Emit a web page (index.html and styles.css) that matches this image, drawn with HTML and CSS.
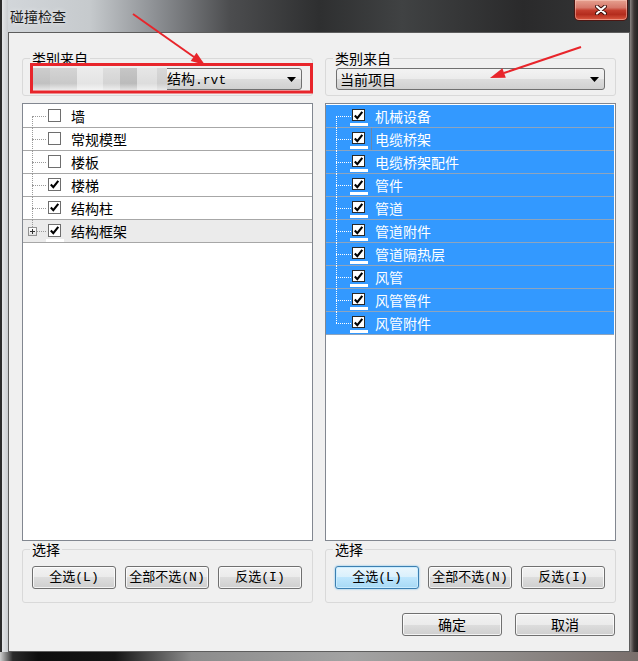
FILE: index.html
```html
<!DOCTYPE html>
<html lang="zh-CN">
<head>
<meta charset="utf-8">
<title>碰撞检查</title>
<link rel="stylesheet" href="styles.css">
</head>
<body>
<div class="window">
  <div class="titlebar">
    <span class="title">碰撞检查</span>
    <div class="close">
      <svg width="12" height="10" viewBox="0 0 12 10">
        <path d="M2 1.5 L10 8.5 M10 1.5 L2 8.5" stroke="#3a0d08" stroke-width="4" stroke-linecap="round"/>
        <path d="M2 1.5 L10 8.5 M10 1.5 L2 8.5" stroke="#ffffff" stroke-width="2.2" stroke-linecap="round"/>
      </svg>
    </div>
  </div>
  <div class="client">
    <div class="columns">
      <div class="column">
        <fieldset class="group source">
          <legend>类别来自</legend>
          <div class="combo blurred">
            <span class="blur">
              <span class="b1"></span><span class="b2"></span><span class="b3"></span><span class="b4"></span><span class="b5"></span><span class="b6"></span><span class="b7"></span>
            </span>
            <span class="combo-value">结构<span class="mono">.rvt</span></span>
            <svg class="combo-arrow" width="9" height="5" viewBox="0 0 9 5"><path d="M0 0 H9 L4.5 5 Z" fill="#000"/></svg>
          </div>
        </fieldset>
        <div class="tree">
          <ul class="rows">
            <li class="row first"><span class="branch"></span><span class="checkwrap"><span class="check"></span></span><span class="label">墙</span></li>
            <li class="row"><span class="branch"></span><span class="checkwrap"><span class="check"></span></span><span class="label">常规模型</span></li>
            <li class="row"><span class="branch"></span><span class="checkwrap"><span class="check"></span></span><span class="label">楼板</span></li>
            <li class="row"><span class="branch"></span><span class="checkwrap"><span class="check checked"><svg width="11" height="11" viewBox="0 0 11 11"><path d="M1.8 5.6 L4.3 8.2 L9.3 1.8" fill="none" stroke="#000" stroke-width="2.1"/></svg></span></span><span class="label">楼梯</span></li>
            <li class="row"><span class="branch"></span><span class="checkwrap"><span class="check checked"><svg width="11" height="11" viewBox="0 0 11 11"><path d="M1.8 5.6 L4.3 8.2 L9.3 1.8" fill="none" stroke="#000" stroke-width="2.1"/></svg></span></span><span class="label">结构柱</span></li>
            <li class="row last hover"><span class="branch"><span class="expander"><svg width="7" height="7" viewBox="0 0 7 7"><path d="M1 3.5 H6 M3.5 1 V6" stroke="#333" stroke-width="1"/></svg></span></span><span class="checkwrap"><span class="check checked"><svg width="11" height="11" viewBox="0 0 11 11"><path d="M1.8 5.6 L4.3 8.2 L9.3 1.8" fill="none" stroke="#000" stroke-width="2.1"/></svg></span><span class="bar"></span></span><span class="label">结构框架</span></li>
          </ul>
        </div>
        <fieldset class="group select">
          <legend>选择</legend>
          <div class="buttons">
            <button class="btn">全选(L)</button>
            <button class="btn">全部不选(N)</button>
            <button class="btn">反选(I)</button>
          </div>
        </fieldset>
      </div>
      <div class="column">
        <fieldset class="group source">
          <legend>类别来自</legend>
          <div class="combo">
            <span class="combo-value">当前项目</span>
            <svg class="combo-arrow" width="9" height="5" viewBox="0 0 9 5"><path d="M0 0 H9 L4.5 5 Z" fill="#000"/></svg>
          </div>
        </fieldset>
        <div class="tree active">
          <ul class="rows">
            <li class="row first"><span class="branch"></span><span class="checkwrap"><span class="check checked"><svg width="11" height="11" viewBox="0 0 11 11"><path d="M1.8 5.6 L4.3 8.2 L9.3 1.8" fill="none" stroke="#000" stroke-width="2.1"/></svg></span><span class="bar"></span></span><span class="label">机械设备</span></li>
            <li class="row"><span class="branch"></span><span class="checkwrap"><span class="check checked"><svg width="11" height="11" viewBox="0 0 11 11"><path d="M1.8 5.6 L4.3 8.2 L9.3 1.8" fill="none" stroke="#000" stroke-width="2.1"/></svg></span><span class="bar"></span></span><span class="label focus">电缆桥架</span></li>
            <li class="row"><span class="branch"></span><span class="checkwrap"><span class="check checked"><svg width="11" height="11" viewBox="0 0 11 11"><path d="M1.8 5.6 L4.3 8.2 L9.3 1.8" fill="none" stroke="#000" stroke-width="2.1"/></svg></span><span class="bar"></span></span><span class="label">电缆桥架配件</span></li>
            <li class="row"><span class="branch"></span><span class="checkwrap"><span class="check checked"><svg width="11" height="11" viewBox="0 0 11 11"><path d="M1.8 5.6 L4.3 8.2 L9.3 1.8" fill="none" stroke="#000" stroke-width="2.1"/></svg></span><span class="bar"></span></span><span class="label">管件</span></li>
            <li class="row"><span class="branch"></span><span class="checkwrap"><span class="check checked"><svg width="11" height="11" viewBox="0 0 11 11"><path d="M1.8 5.6 L4.3 8.2 L9.3 1.8" fill="none" stroke="#000" stroke-width="2.1"/></svg></span><span class="bar"></span></span><span class="label">管道</span></li>
            <li class="row"><span class="branch"></span><span class="checkwrap"><span class="check checked"><svg width="11" height="11" viewBox="0 0 11 11"><path d="M1.8 5.6 L4.3 8.2 L9.3 1.8" fill="none" stroke="#000" stroke-width="2.1"/></svg></span><span class="bar"></span></span><span class="label">管道附件</span></li>
            <li class="row"><span class="branch"></span><span class="checkwrap"><span class="check checked"><svg width="11" height="11" viewBox="0 0 11 11"><path d="M1.8 5.6 L4.3 8.2 L9.3 1.8" fill="none" stroke="#000" stroke-width="2.1"/></svg></span><span class="bar"></span></span><span class="label">管道隔热层</span></li>
            <li class="row"><span class="branch"></span><span class="checkwrap"><span class="check checked"><svg width="11" height="11" viewBox="0 0 11 11"><path d="M1.8 5.6 L4.3 8.2 L9.3 1.8" fill="none" stroke="#000" stroke-width="2.1"/></svg></span><span class="bar"></span></span><span class="label">风管</span></li>
            <li class="row"><span class="branch"></span><span class="checkwrap"><span class="check checked"><svg width="11" height="11" viewBox="0 0 11 11"><path d="M1.8 5.6 L4.3 8.2 L9.3 1.8" fill="none" stroke="#000" stroke-width="2.1"/></svg></span><span class="bar"></span></span><span class="label">风管管件</span></li>
            <li class="row last"><span class="branch"></span><span class="checkwrap"><span class="check checked"><svg width="11" height="11" viewBox="0 0 11 11"><path d="M1.8 5.6 L4.3 8.2 L9.3 1.8" fill="none" stroke="#000" stroke-width="2.1"/></svg></span><span class="bar"></span></span><span class="label">风管附件</span></li>
          </ul>
        </div>
        <fieldset class="group select">
          <legend>选择</legend>
          <div class="buttons">
            <button class="btn focused">全选(L)</button>
            <button class="btn">全部不选(N)</button>
            <button class="btn">反选(I)</button>
          </div>
        </fieldset>
      </div>
    </div>
    <div class="footer">
      <button class="btn wide">确定</button>
      <button class="btn wide">取消</button>
    </div>
  </div>
  <svg class="annotations" width="638" height="661" viewBox="0 0 638 661">
    <rect x="31.5" y="64.5" width="280" height="27.5" fill="none" stroke="#e8252b" stroke-width="3"/>
    <line x1="133" y1="14" x2="194" y2="57" stroke="#e8252b" stroke-width="2"/>
    <polygon points="205,65 190.7,61 196.5,52.8" fill="#e8252b"/>
    <line x1="581" y1="47" x2="504" y2="73" stroke="#e8252b" stroke-width="2"/>
    <polygon points="490,78 505.8,77.7 502.4,68.3" fill="#e8252b"/>
  </svg>
</div>
</body>
</html>
```

FILE: styles.css
```css
html, body {
  margin: 0;
  padding: 0;
}

body {
  width: 638px;
  height: 661px;
  overflow: hidden;
}

.window {
  width: 638px;
  height: 661px;
  box-sizing: border-box;
  display: flex;
  flex-direction: column;
  position: relative;
  overflow: hidden;
  font-family: "Noto Sans CJK SC", "Noto Sans", sans-serif;
  background:
    linear-gradient(90deg, #cfcfcf 0, #2a2a2a 2%, #0e0e0e 6%, #151515 18%, #8c8c8c 30%, #a3a3a3 55%, #8e8a88 80%, #7a6f6c 100%) left bottom / 100% 9px no-repeat,
    linear-gradient(90deg, #2b2b2b 0, #2b2b2b 2px, #e4e6e8 2px, #c9ccd0 8px) left top / 8px 100% no-repeat,
    linear-gradient(90deg, #8a8583 0, #3a3434 4px, #222 8px) right top / 8px 100% no-repeat,
    linear-gradient(90deg, #d3d7db 0%, #c6cacd 14%, #8f9296 24%, #4c4d4f 36%, #2e2f30 50%, #404243 63%, #2a2a2b 82%, #38393a 100%);
}

/* Title bar */
.titlebar {
  height: 32px;
  flex: none;
  display: flex;
  justify-content: space-between;
  align-items: flex-start;
}

.title {
  margin: 8px 0 0 10px;
  font-size: 14px;
  line-height: 16px;
  color: #1b1b1b;
  text-shadow: 0 0 5px rgba(255, 255, 255, 0.7);
}

.close {
  width: 54px;
  height: 21px;
  margin-right: 10px;
  box-sizing: border-box;
  border: 1px solid #4c1612;
  border-top: none;
  border-radius: 0 0 5px 5px;
  background: linear-gradient(#e6a190 0%, #d6786a 38%, #c33d2d 52%, #b42c1d 72%, #dc5a42 100%);
  box-shadow: inset 0 0 0 1px rgba(255, 215, 205, 0.45);
  display: flex;
  align-items: center;
  justify-content: center;
}

/* Client area */
.client {
  flex: 1;
  margin: 0 8px 9px 8px;
  border: 1px solid #5d5d5d;
  background: #f0f0f0;
  display: flex;
  flex-direction: column;
  min-height: 0;
}

.columns {
  display: flex;
  gap: 12px;
  padding: 17px 13px 0 13px;
}

.column {
  width: 291px;
  flex: none;
  display: flex;
  flex-direction: column;
}

/* Group boxes */
.group {
  margin: 0;
  border: 1px solid #d9d9d9;
  border-radius: 3px;
  min-width: 0;
}

.group legend {
  font-size: 14px;
  line-height: 16px;
  color: #000;
}

.source {
  padding: 2px 10px 5px 10px;
}

.source legend {
  margin-left: -3px;
  padding: 0 2px;
}

.select {
  padding: 9px 9px 13px 9px;
}

.select legend {
  margin-left: -2px;
  padding: 0 2px;
}

/* Combo box */
.combo {
  height: 22px;
  box-sizing: border-box;
  border: 1px solid #707070;
  border-radius: 3px;
  background: linear-gradient(#f3f3f3, #ebebeb 50%, #dddddd 50%, #d0d0d0);
  display: flex;
  align-items: center;
  padding: 0 4px 0 3px;
  font-size: 14px;
  line-height: 20px;
  color: #000;
}

.combo.blurred {
  padding-left: 0;
}

.combo-value {
  flex: 1;
  white-space: nowrap;
}

.mono {
  font-family: "Liberation Mono", monospace;
  font-size: 13px;
}

.combo-arrow {
  flex: none;
  margin-right: 1px;
}

.blur {
  display: flex;
  align-self: stretch;
  margin: -1px 0 -1px -1px;
}

.blur span {
  display: block;
  height: 22px;
}

.blur .b1 { width: 17px; background: linear-gradient(#cdcdcd, #c1c1c1 70%, #e6e6e6); }
.blur .b2 { width: 27px; background: linear-gradient(#d4d4d4, #c9c9c9 70%, #ececec); }
.blur .b3 { width: 26px; background: linear-gradient(#ececec, #e4e4e4 70%, #f4f4f4); }
.blur .b4 { width: 17px; background: linear-gradient(#dedede, #d4d4d4 70%, #eeeeee); }
.blur .b5 { width: 17px; background: linear-gradient(#c6c6c6, #bbbbbb 70%, #e2e2e2); }
.blur .b6 { width: 20px; background: linear-gradient(#e6e6e6, #dddddd 70%, #f0f0f0); }
.blur .b7 { width: 10px; background: linear-gradient(#d8d8d8, #cecece 70%, #e8e8e8); }

/* Tree list */
.tree {
  margin-top: 7px;
  height: 438px;
  box-sizing: border-box;
  border: 1px solid #828790;
  background: #fff;
}

.rows {
  list-style: none;
  margin: 0;
  padding: 1px 0 0 0;
}

.row {
  display: flex;
  align-items: flex-start;
  height: 22px;
  border-bottom: 1px solid #a7a7a7;
  color: #000;
}

.row.hover {
  background: #ebebeb;
}

.branch {
  width: 25px;
  flex: none;
  align-self: stretch;
  position: relative;
}

.branch::before {
  content: "";
  position: absolute;
  left: 9px;
  top: 0;
  bottom: -1px;
  border-left: 1px dotted #9a9a9a;
}

.branch::after {
  content: "";
  position: absolute;
  left: 9px;
  top: 11px;
  width: 14px;
  border-top: 1px dotted #9a9a9a;
}

.row.first .branch::before {
  top: 11px;
}

.row.last .branch::before {
  bottom: auto;
  height: 11px;
}

.expander {
  position: absolute;
  left: 5px;
  top: 7px;
  width: 9px;
  height: 9px;
  box-sizing: border-box;
  border: 1px solid #919191;
  background: linear-gradient(#ffffff, #e2e2e2);
  z-index: 1;
  display: flex;
  align-items: center;
  justify-content: center;
}

.checkwrap {
  width: 13px;
  flex: none;
  display: flex;
  flex-direction: column;
  align-items: center;
}

.check {
  width: 13px;
  height: 13px;
  margin-top: 4px;
  box-sizing: border-box;
  border: 1px solid #6e6e6e;
  background: #fff;
  display: flex;
  align-items: center;
  justify-content: center;
}

.bar {
  display: block;
  width: 18px;
  height: 3px;
  margin-top: 2px;
  background: #fff;
  flex: none;
}

.label {
  padding-left: 10px;
  font-size: 14px;
  line-height: 22px;
  white-space: nowrap;
}

/* Active (selected) tree on the right */
.tree.active .row {
  background: #3399ff;
  color: #fff;
  border-bottom-color: #8ea4bd;
  margin-right: 1px;
}

.tree.active .branch {
  width: 26px;
}

.tree.active .branch::before,
.tree.active .branch::after {
  left: 10px;
  border-color: #ffffff;
}

.tree.active .branch::after {
  width: 15px;
}

.tree.active .check {
  height: 12px;
  border-color: #2a2a2a;
}

.tree.active .label {
  flex: 1;
  align-self: stretch;
  margin-left: 6px;
  padding-left: 4px;
}

.tree.active .label.focus {
  border-left: 1px solid #6d87a8;
  padding-left: 3px;
}

/* Buttons */
.buttons {
  display: flex;
  gap: 9px;
}

.btn {
  width: 84px;
  height: 23px;
  box-sizing: border-box;
  margin: 0;
  padding: 0;
  border: 1px solid #707070;
  border-radius: 3px;
  background: linear-gradient(#f2f2f2, #ebebeb 50%, #dddddd 50%, #cfcfcf);
  box-shadow: inset 0 0 0 1px rgba(255, 255, 255, 0.75);
  font-family: "Liberation Mono", "Noto Sans CJK SC", monospace;
  font-size: 13px;
  line-height: 21px;
  color: #000;
  white-space: nowrap;
}

.btn.focused {
  border-color: #3c7fb1;
  background: linear-gradient(#eaf6fd, #d9f0fc 50%, #bee6fd 50%, #a7d9f5);
  box-shadow: inset 0 0 0 1px #c9ecff, 0 0 2px #5fb6ec;
}

.btn.wide {
  width: 100px;
  font-family: "Noto Sans CJK SC", sans-serif;
  font-size: 14px;
}

.footer {
  display: flex;
  justify-content: flex-end;
  gap: 13px;
  padding: 10px 14px 0 0;
}

/* Red annotation marks drawn over the dialog */
.annotations {
  position: absolute;
  left: 0;
  top: 0;
  pointer-events: none;
}
```
